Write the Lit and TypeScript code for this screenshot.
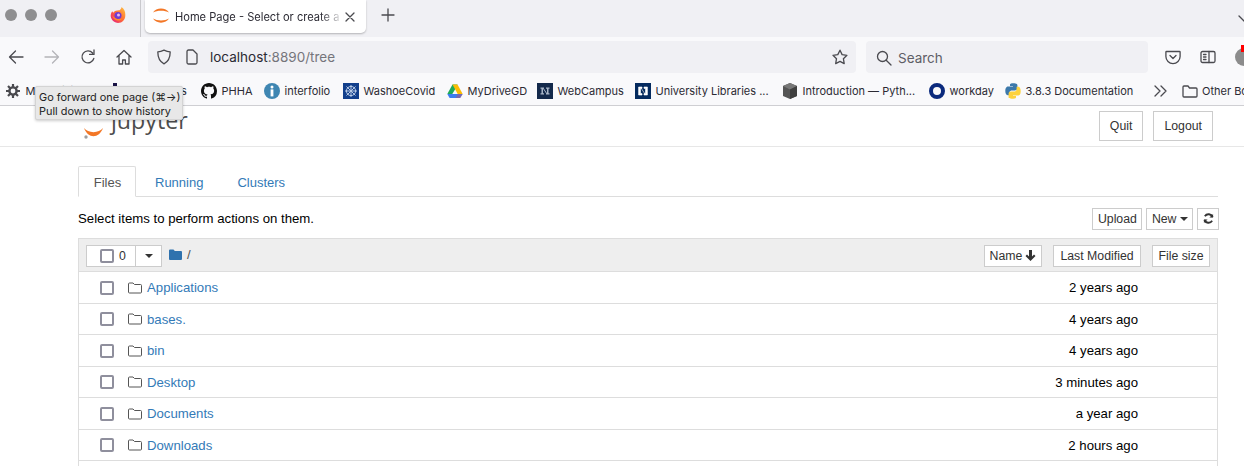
import { LitElement, html, css, svg } from 'lit';
import { customElement } from 'lit/decorators.js';

// file rows shown in the notebook tree
const FILES = [
  { name: 'Applications', age: '2 years ago' },
  { name: 'bases.', age: '4 years ago' },
  { name: 'bin', age: '4 years ago' },
  { name: 'Desktop', age: '3 minutes ago' },
  { name: 'Documents', age: 'a year ago' },
  { name: 'Downloads', age: '2 hours ago' },
  { name: '', age: '' },
];

const githubMark = 'M8 0C3.58 0 0 3.58 0 8c0 3.54 2.29 6.53 5.47 7.59.4.07.55-.17.55-.38 0-.19-.01-.82-.01-1.49-2.01.37-2.53-.49-2.69-.94-.09-.23-.48-.94-.82-1.13-.28-.15-.68-.52-.01-.53.63-.01 1.08.58 1.23.82.72 1.21 1.87.87 2.33.66.07-.52.28-.87.51-1.07-1.78-.2-3.64-.89-3.64-3.95 0-.87.31-1.59.82-2.15-.08-.2-.36-1.02.08-2.12 0 0 .67-.21 2.2.82.64-.18 1.32-.27 2-.27.68 0 1.36.09 2 .27 1.53-1.04 2.2-.82 2.2-.82.44 1.1.16 1.92.08 2.12.51.56.82 1.27.82 2.15 0 3.07-1.87 3.75-3.65 3.95.29.25.54.73.54 1.48 0 1.07-.01 1.93-.01 2.2 0 .21.15.46.55.38A8.013 8.013 0 0016 8c0-4.42-3.58-8-8-8z';

const favicons: Record<string, unknown> = {
  gear: svg`<g fill="none" stroke="#4a4a4f"><circle cx="8" cy="8" r="3.6" stroke-width="2.4"/><path d="M8 1v3M8 12v3M1 8h3M12 8h3M3 3l2.2 2.2M10.8 10.8L13 13M13 3l-2.2 2.2M5.2 10.8L3 13" stroke-width="2.2"/></g>`,
  dark: svg`<rect x="5" y="0" width="4" height="16" fill="#1b1446"/>`,
  github: svg`<path d=${githubMark} fill="#111"/>`,
  info: svg`<circle cx="8" cy="8" r="8" fill="#3f86b2"/><circle cx="8" cy="4" r="1.5" fill="#fff"/><rect x="6.6" y="6.4" width="2.8" height="7" fill="#fff"/>`,
  washoe: svg`<rect width="16" height="16" fill="#123f8c"/><g stroke="#b9cbe6" stroke-width="1" fill="none"><circle cx="8" cy="8" r="4.6"/><path d="M8 2v12M2 8h12M3.5 3.5l9 9M12.5 3.5l-9 9"/></g>`,
  drive: svg`<path d="M5.5 1.5h5L8 6.5 5.3 11H0.3z" fill="#1faa5a"/><path d="M5.5 1.5h5l5.2 9.5h-5z" fill="#fbbc04"/><path d="M3 11h12.7l-2.5 4H2.6L0.3 11z" fill="#3b7df0"/><path d="M10.7 11h5l-2.5 4H8.6z" fill="#ea4335" opacity=".35"/>`,
  navyDim: svg`<rect width="16" height="16" fill="#13294b"/><path d="M3.500 4.500H7v1.200H6v4.600h1v1.200H3.500v-1.200h1V5.700h-1zM12.500 4.500H9v1.200h1v4.600H9v1.200h3.500v-1.200h-1V5.700h1z" fill="#a9b6c8"/><path d="M6 5l4 6" stroke="#a9b6c8"/>`,
  navy: svg`<rect width="16" height="16" fill="#042a5e"/><path d="M3.600 4H7v1.400H5.500v5.200H7V12H3.600zM12.400 4H9v1.400h1.500v5.200H9V12h3.400zM6 5l4 6" fill="#fff" stroke="#fff" stroke-width=".6"/>`,
  cube: svg`<path d="M8 0l7 3v10l-7 3-7-3V3z" fill="#555"/><path d="M8 6.500L1 3l7-3 7 3z" fill="#777"/><path d="M8 6.500V16l7-3V3z" fill="#3f3f3f"/>`,
  ring: svg`<circle cx="8" cy="8" r="6" fill="none" stroke="#0b2a7d" stroke-width="4"/>`,
  python: svg`<path d="M7.900 0.300C4.800 0.300 5 1.600 5 1.600V3h3v.5H3.200S.3 3.200.3 7.800s2.600 4.400 2.600 4.400h1.500v-2.100s-.1-2.600 2.500-2.600h3.100s2.400 0 2.400-2.400V1.900S12.300 .3 7.900 .3z" fill="#3c78aa"/><path d="M8.100 15.700c3.100 0 2.900-1.300 2.900-1.300V13H8v-.5h4.800s2.900.3 2.900-4.300-2.600-4.400-2.600-4.400h-1.500v2.100s.1 2.600-2.500 2.600H6s-2.400 0-2.400 2.400v3.200s-.4 1.600 4.500 1.600z" fill="#fdd23e"/>`,
};

const BOOKMARKS = [
  { icon: 'gear', label: 'Most Visited', width: 103 },
  { icon: 'dark', label: 'Bookmarks', width: 93 },
  { icon: 'github', label: 'PHHA', width: 63 },
  { icon: 'info', label: 'interfolio', width: 79 },
  { icon: 'washoe', label: 'WashoeCovid', width: 104 },
  { icon: 'drive', label: 'MyDriveGD', width: 90 },
  { icon: 'navyDim', label: 'WebCampus', width: 98 },
  { icon: 'navy', label: 'University Libraries ...', width: 147 },
  { icon: 'cube', label: 'Introduction — Pyth...', width: 147 },
  { icon: 'ring', label: 'workday', width: 76 },
  { icon: 'python', label: '3.8.3 Documentation', width: 148 },
];

@customElement('app-root')
export class AppRoot extends LitElement {
  static styles = css`
    :host {
      display: block;
      position: relative;
      width: 1244px;
      height: 466px;
      overflow: hidden;
      background: #fff;
      font-family: 'Liberation Sans', Arial, sans-serif;
      font-size: 13.2px;
      color: #000;
    }

    .chrome {
      font-family: Inter, 'Liberation Sans', sans-serif;
      color: #2b2a33;
    }

    /* tab strip */
    .strip {
      height: 37px;
      background: #f0f0f4;
      display: flex;
      align-items: flex-start;
    }

    .lights {
      display: flex;
      gap: 8px;
      padding: 9px 0 0 5px;
      width: 105px;
      box-sizing: border-box;
    }

    .lights i {
      width: 12px;
      height: 12px;
      border-radius: 50%;
      background: #8e8e90;
    }

    .fox {
      width: 16px;
      height: 16px;
      margin: 7px 0 0 5px;
    }

    .strip-sep {
      width: 1px;
      height: 37px;
      background: #c9c9cd;
      margin-left: 14px;
    }

    .tab {
      width: 221px;
      height: 33px;
      margin-left: 4px;
      background: #fff;
      border-radius: 0 0 5px 5px;
      box-shadow: 0 1px 2px rgba(0, 0, 0, 0.25);
      display: flex;
      align-items: center;
      box-sizing: border-box;
      padding: 0 10px 0 8px;
    }

    .tab-title {
      flex: 1;
      margin-left: 6px;
      font-size: 11.1px;
      white-space: nowrap;
      overflow: hidden;
      -webkit-mask-image: linear-gradient(to right, #000 86%, transparent);
      mask-image: linear-gradient(to right, #000 86%, transparent);
    }

    .new-tab {
      margin: 8px 0 0 15px;
    }

    .strip-end {
      margin: 11px -6px 0 auto;
    }

    /* toolbar */
    .toolbar {
      height: 40px;
      background: #f9f9fb;
      display: flex;
      align-items: center;
      box-sizing: border-box;
      padding: 0 0 0 8px;
    }

    .nav-icons {
      display: flex;
      gap: 20px;
      width: 140px;
      flex: none;
    }

    .field {
      height: 32px;
      background: #f0f0f4;
      border-radius: 4px;
      display: flex;
      align-items: center;
      box-sizing: border-box;
      flex: none;
    }

    .url {
      width: 708px;
      padding: 0 8px 0 8px;
      font-size: 13.5px;
    }

    .url svg + svg {
      margin-left: 13px;
    }

    .url-text {
      flex: 1;
      margin-left: 11px;
      color: #75757b;
    }

    .url-text b {
      font-weight: 400;
      color: #2b2a33;
    }

    .search {
      width: 282px;
      margin-left: 10px;
      padding: 1px 10px 0;
      font-size: 13.5px;
      color: #5e5e66;
      gap: 6px;
    }

    .tool-end {
      display: flex;
      align-items: center;
      gap: 19px;
      margin-left: 17px;
      flex: none;
    }

    .avatar {
      position: relative;
      width: 18px;
      height: 18px;
      border-radius: 50%;
      background: #8c8c8c;
      flex: none;
    }

    .avatar::after {
      content: '';
      position: absolute;
      top: -3px;
      left: 6px;
      width: 8px;
      height: 7px;
      background: #f00;
    }

    /* bookmarks */
    .bookmarks {
      height: 28px;
      background: #f9f9fb;
      border-bottom: 1px solid #cfcfd3;
      display: flex;
      align-items: center;
      padding-left: 5px;
      font-size: 11px;
      white-space: nowrap;
    }

    .mark {
      display: flex;
      align-items: center;
      gap: 4.5px;
      flex: none;
    }

    .mark svg {
      flex: none;
    }

    .other {
      display: flex;
      align-items: center;
      gap: 4px;
      margin-left: 13px;
    }

    /* tooltip over the bookmarks */
    .tooltip {
      position: absolute;
      left: 35px;
      top: 86px;
      width: 148px;
      height: 34px;
      box-sizing: border-box;
      padding: 3px 3px;
      background: #e8e8e8;
      border: 1px solid #d4d4d4;
      border-radius: 2px;
      box-shadow: 0 1px 3px rgba(0, 0, 0, 0.2);
      font-size: 10.9px;
      line-height: 14px;
      white-space: nowrap;
      color: #222;
    }

    /* notebook page */
    .page-head {
      height: 41px;
      border-bottom: 1px solid #e7e7e7;
      display: flex;
      align-items: flex-start;
      padding: 5px 31px 0 78px;
      box-sizing: border-box;
      overflow: hidden;
    }

    .logo {
      display: flex;
      align-items: flex-start;
      margin: -5px 0 0 5px;
      flex: 1;
    }

    .logo-name {
      font-size: 23.2px;
      line-height: 30px;
      color: #4e4e4e;
      margin: -1px 0 0 6px;
      font-family: 'Open Sans', sans-serif;
    }

    .btn {
      background: #fff;
      border: 1px solid #ccc;
      font-size: 12.3px;
      color: #333;
      display: flex;
      align-items: center;
      justify-content: center;
      box-sizing: border-box;
      flex: none;
    }

    .head-btn {
      height: 30px;
      padding: 0 10px;
      margin-left: 10px;
    }

    .body {
      width: 1140px;
      margin: 0 0 0 78px;
    }

    .tabs {
      display: flex;
      height: 30px;
      margin-top: 19px;
      border-bottom: 1px solid #ddd;
      font-size: 13px;
    }

    .tabs span {
      display: flex;
      align-items: center;
      padding: 3px 17px 0;
      color: #337ab7;
    }

    .tabs .on {
      width: 58px;
      box-sizing: border-box;
      justify-content: center;
      padding: 2px 0 0 1px;
      color: #555;
      background: #fff;
      border: 1px solid #ddd;
      border-bottom: 1px solid #fff;
      height: 31px;
      border-radius: 2px 2px 0 0;
      margin-right: 2px;
    }

    .actions {
      display: flex;
      align-items: center;
      justify-content: flex-end;
      height: 41px;
      box-sizing: border-box;
      padding-top: 2px;
      gap: 4px;
      margin-right: -1px;
    }

    .action-label {
      margin-right: auto;
    }

    .sm {
      height: 22px;
      padding: 0 4.5px;
      gap: 3px;
    }

    .col-name {
      width: 58px;
      padding: 0;
    }

    .col-modified {
      width: 88px;
      padding: 0;
    }

    .col-size {
      width: 58px;
      padding: 0;
    }

    .list {
      border: 1px solid #ddd;
      border-bottom: none;
    }

    .list-head {
      height: 32px;
      box-sizing: border-box;
      padding: 1px 7px 0;
      background: #eee;
      display: flex;
      align-items: center;
      gap: 11px;
    }

    .picker {
      display: flex;
      width: 76px;
      height: 22px;
      background: #fff;
      border: 1px solid #ccc;
      box-sizing: border-box;
    }

    .picker-main {
      flex: 1;
      display: flex;
      align-items: center;
      gap: 5px;
      padding-left: 13px;
      border-right: 1px solid #ccc;
      font-size: 12.3px;
      color: #333;
    }

    .picker-caret {
      width: 25px;
      display: flex;
      align-items: center;
      justify-content: center;
    }

    .box {
      width: 14px;
      height: 14px;
      box-sizing: border-box;
      border: 2px solid #8f8f9d;
      border-radius: 2px;
      background: #fff;
      flex: none;
    }

    .crumb {
      display: flex;
      align-items: center;
      gap: 5px;
      margin: -3px 0 0 -4px;
      flex: 1;
      color: #555;
    }

    .row {
      height: 31.5px;
      border-top: 1px solid #ddd;
      box-sizing: border-box;
      display: flex;
      align-items: center;
      padding: 1px 79px 0 21px;
    }

    .row .folder {
      margin-left: 14px;
      flex: none;
    }

    .row a {
      margin-left: 5px;
      color: #337ab7;
      flex: 1;
    }

    .caret {
      width: 0;
      height: 0;
      border: 4px solid transparent;
      border-top-color: #333;
      border-bottom: none;
    }
  `;

  private favicon(name: string) {
    return html`<svg width="16" height="16" viewBox="0 0 16 16">${favicons[name]}</svg>`;
  }

  private line(w: number, h: number, body: unknown, stroke = '#4a4a4f') {
    return html`<svg width=${w} height=${h} viewBox="0 0 ${w} ${h}" fill="none" stroke=${stroke} stroke-width="1.3" stroke-linecap="round" stroke-linejoin="round" style="flex:none">${body}</svg>`;
  }

  private renderStrip() {
    return html`
      <div class="strip">
        <div class="lights"><i></i><i></i><i></i></div>
        <svg class="fox" viewBox="0 0 16 16">
          <defs>
            <linearGradient id="foxFill" x1="1" y1="0" x2="0" y2="1">
              <stop offset="0" stop-color="#ffc83d"/>
              <stop offset=".5" stop-color="#ff6a36"/>
              <stop offset="1" stop-color="#e31587"/>
            </linearGradient>
          </defs>
          <path d="M11.500 0c2.800 1.800 4 5 3.800 8.300A7.300 7.300 0 1 1 2.200 4.200l1 1.500C4.800 3.600 7.500 3 9.500 3.200 10.800 2.400 11.500 1.400 11.500 0z" fill="url(#foxFill)"/>
          <circle cx="8" cy="8.400" r="3.500" fill="#6e3bd1"/>
          <circle cx="8.500" cy="8" r="1.500" fill="#e9b8f0"/>
          <path d="M2.200 8.500c.8 3.400 3.600 5.200 6.300 5 2-.1 3.500-1.100 4.300-2.500-1.800 1.200-5.200 1.600-7.400.2-1.500-.9-2.400-1.800-3.200-2.700z" fill="#ff8a2a"/>
        </svg>
        <div class="strip-sep"></div>
        <div class="tab">
          <svg width="16" height="18" viewBox="0 0 16 18" style="flex:none">
            <path d="M0 4.500C3-1 13-1 16 4.500C12 2 4 2 0 4.500Z" fill="#f37726"/>
            <path d="M0 10.500C3 16 13 16 16 10.500C12 13 4 13 0 10.500Z" fill="#f37726"/>
          </svg>
          <span class="tab-title">Home Page - Select or create a notebook</span>
          ${this.line(12, 12, svg`<path d="M2 2l8 8M10 2l-8 8"/>`)}
        </div>
        <div class="new-tab">${this.line(14, 14, svg`<path d="M7 1v12M1 7h12"/>`)}</div>
        <div class="strip-end">${this.line(12, 10, svg`<path d="M1 2l5 5 5-5"/>`)}</div>
      </div>
    `;
  }

  private renderToolbar() {
    return html`
      <div class="toolbar">
        <div class="nav-icons">
          ${this.line(16, 16, svg`<path d="M15 8H1.500M7.500 2L1.500 8l6 6"/>`)}
          ${this.line(16, 16, svg`<path d="M1 8h13.500M8.500 2l6 6-6 6"/>`, '#b4b4b8')}
          ${this.line(16, 16, svg`<path d="M13.800 9.500A6 6 0 1 1 12.600 4M14 1v4.400H9.600"/>`)}
          ${this.line(16, 16, svg`<path d="M1 8l7-6.500L15 8M3 6.500V15h3.600v-4h2.800v4H13V6.500"/>`)}
        </div>
        <div class="field url">
          ${this.line(16, 16, svg`<path d="M8 1.200c2 1 4 1.600 6.200 1.600 0 5.600-1.600 9.800-6.200 12-4.600-2.200-6.200-6.400-6.200-12C4 2.800 6 2.200 8 1.200z"/>`)}
          ${this.line(14, 16, svg`<path d="M2 2.500a1.500 1.500 0 0 1 1.500-1.500H8l4 4v8.500a1.500 1.500 0 0 1-1.500 1.500h-7A1.500 1.500 0 0 1 2 13.500z"/>`)}
          <span class="url-text"><b>localhost</b>:8890/tree</span>
          ${this.line(16, 16, svg`<path d="M8 1.200l2.100 4.400 4.800.7-3.500 3.400.8 4.900L8 12.400l-4.300 2.200.8-4.900L1 6.300l4.800-.7z"/>`)}
        </div>
        <div class="field search">
          ${this.line(16, 16, svg`<circle cx="6.500" cy="6.500" r="5"/><path d="M10.200 10.200L15 15"/>`)}
          <span>Search</span>
        </div>
        <div class="tool-end">
          ${this.line(16, 16, svg`<path d="M1.500 2.500h13c.4 0 .6.300.6.600v4.400a7 7 0 0 1-14.200 0V3.100c0-.3.200-.6.600-.600zM5 6.500l3 3 3-3"/>`)}
          ${this.line(16, 14, svg`<rect x="1" y="1.500" width="14" height="11" rx="1.500"/><path d="M9 1.500v11M3.500 4.500h2.500M3.500 7h2.500M3.500 9.500h2.500"/>`)}
          <div class="avatar"></div>
        </div>
      </div>
    `;
  }

  private renderBookmarks() {
    return html`
      <div class="bookmarks chrome">
        ${BOOKMARKS.map(
          (b) => html`<div class="mark" style="width:${b.width}px">${this.favicon(b.icon)}<span>${b.label}</span></div>`
        )}
        ${this.line(16, 12, svg`<path d="M2 1l5 5-5 5M8 1l5 5-5 5"/>`)}
        <div class="other">
          ${this.line(16, 14, svg`<path d="M1 3a1 1 0 0 1 1-1h4l1.500 2H14a1 1 0 0 1 1 1v7a1 1 0 0 1-1 1H2a1 1 0 0 1-1-1z"/>`)}
          <span>Other Bookmarks</span>
        </div>
      </div>
    `;
  }

  private renderRow(f: { name: string; age: string }) {
    return html`
      <div class="row">
        <span class="box"></span>
        <svg class="folder" width="14" height="12" viewBox="0 0 14 12" fill="none" stroke="#555" stroke-width="1">
          <path d="M.5 2A1 1 0 0 1 1.500 1h3.500l1.500 1.500h6a1 1 0 0 1 1 1v6.500a1 1 0 0 1-1 1h-11a1 1 0 0 1-1-1z"/>
        </svg>
        <a>${f.name}</a>
        <span>${f.age}</span>
      </div>
    `;
  }

  render() {
    return html`
      <div class="chrome">
        ${this.renderStrip()}
        ${this.renderToolbar()}
        ${this.renderBookmarks()}
      </div>
      <div class="tooltip chrome">Go forward one page (⌘→)<br />Pull down to show history</div>

      <div class="page-head">
        <div class="logo">
          <svg width="22" height="33" viewBox="0 0 22 33">
            <path d="M1 22C5 27.500 16 27.500 20 22C16 33 5 33 1 22Z" fill="#f37726"/>
            <circle cx="3" cy="31" r="1.700" fill="#9e9e9e"/>
          </svg>
          <span class="logo-name">jupyter</span>
        </div>
        <div class="btn head-btn">Quit</div>
        <div class="btn head-btn">Logout</div>
      </div>

      <div class="body">
        <div class="tabs">
          <span class="on">Files</span>
          <span>Running</span>
          <span>Clusters</span>
        </div>
        <div class="actions">
          <span class="action-label">Select items to perform actions on them.</span>
          <div class="btn sm">Upload</div>
          <div class="btn sm">New <span class="caret"></span></div>
          <div class="btn sm">
            <svg width="11" height="11" viewBox="0 0 12 12" fill="none" stroke="#333" stroke-width="2">
              <path d="M10.500 4.500A4.800 4.800 0 0 0 2 3.500M1.500 7.500A4.800 4.800 0 0 0 10 8.500"/>
              <path d="M11 1v4H7zM1 11V7h4z" fill="#333" stroke="none"/>
            </svg>
          </div>
        </div>
        <div class="list">
          <div class="list-head">
            <div class="picker">
              <div class="picker-main"><span class="box"></span>0</div>
              <div class="picker-caret"><span class="caret"></span></div>
            </div>
            <div class="crumb">
              <svg width="13" height="11" viewBox="0 0 13 11"><path d="M0 1.500A1 1 0 0 1 1 .5h3.500l1.300 1.500H12a1 1 0 0 1 1 1V10a1 1 0 0 1-1 1H1a1 1 0 0 1-1-1z" fill="#2f72ae"/></svg>
              <span>/</span>
            </div>
            <div class="btn sm col-name">Name
              <svg width="11" height="11" viewBox="0 0 11 11"><path d="M5.500 11L.5 6l1.500-1.500 2 2V0h3v6.500l2-2L10.500 6z" fill="#333"/></svg>
            </div>
            <div class="btn sm col-modified">Last Modified</div>
            <div class="btn sm col-size">File size</div>
          </div>
          ${FILES.map((f) => this.renderRow(f))}
        </div>
      </div>
    `;
  }
}

declare global {
  interface HTMLElementTagNameMap {
    'app-root': AppRoot;
  }
}
